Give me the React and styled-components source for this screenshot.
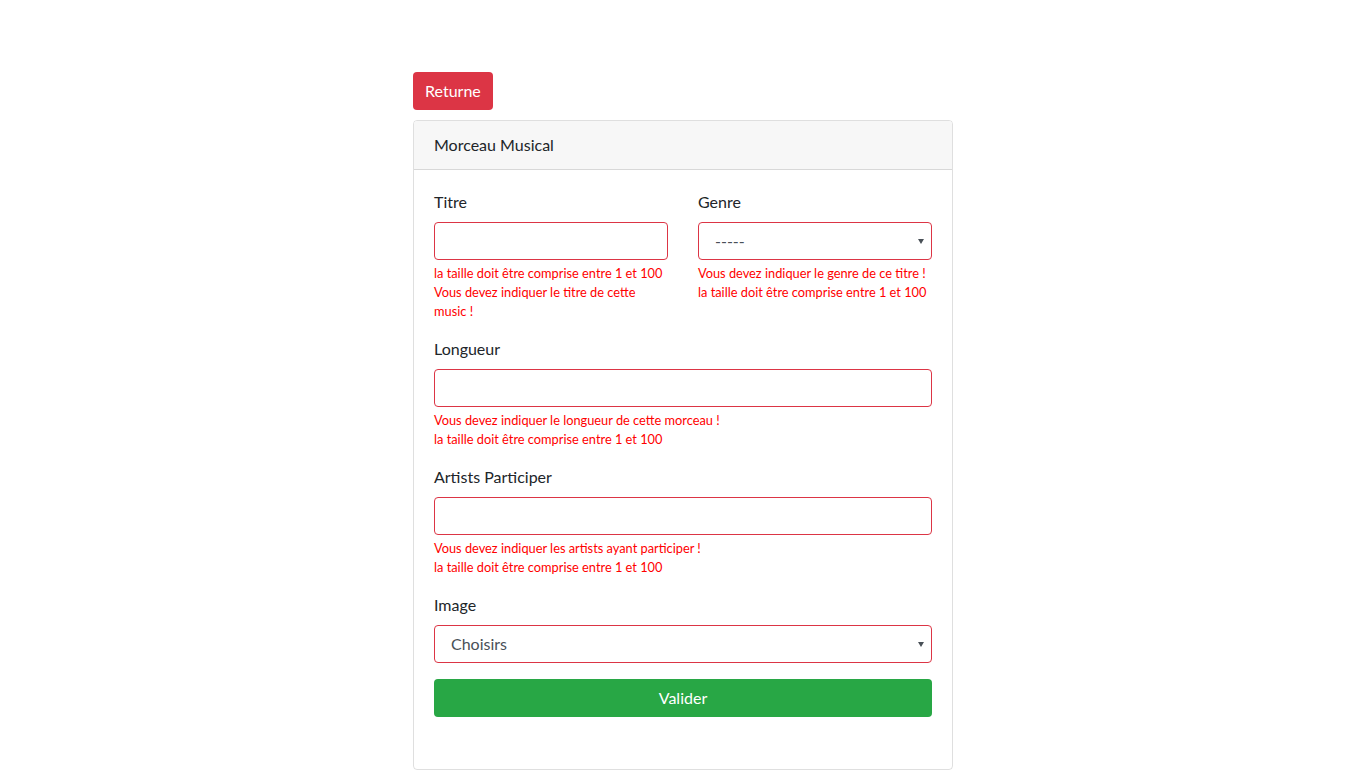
import React from 'react';
import styled, { createGlobalStyle } from 'styled-components';

const GlobalStyle = createGlobalStyle`
    * {
        box-sizing: border-box;
    }

    body {
        margin: 0;
        background: #fff;
        color: #212529;
        font-family: "Segoe UI", Lato, "Noto Sans", sans-serif;
        font-size: 16px;
        line-height: 1.5;
    }
`;

const Page = styled.div`
    width: 540px;
    margin: 0 auto;
    padding-top: 72px;
`;

const BackButton = styled.button`
    display: block;
    height: 38px;
    padding: 0 12px;
    margin-bottom: 10px;
    border: none;
    border-radius: 4px;
    background-color: #dc3545;
    color: #fff;
    font: inherit;
    cursor: pointer;
`;

const Card = styled.div`
    border: 1px solid rgba(0, 0, 0, 0.125);
    border-radius: 4px;
    height: 650px;
`;

const CardHeader = styled.div`
    padding: 12px 20px;
    background-color: #f7f7f7;
    border-bottom: 1px solid rgba(0, 0, 0, 0.125);
    border-radius: 3px 3px 0 0;
`;

const CardBody = styled.form`
    padding: 20px;
`;

const Row = styled.div`
    display: grid;
    grid-template-columns: 1fr 1fr;
    column-gap: 30px;
`;

const Group = styled.div`
    margin-bottom: 16px;
`;

const Label = styled.label`
    display: block;
    margin-bottom: 8px;
`;

const Input = styled.input`
    display: block;
    width: 100%;
    height: 38px;
    padding: 6px 12px;
    border: 1px solid #dc3545;
    border-radius: 4px;
    font: inherit;
    color: #495057;
    outline: none;
`;

const SelectWrap = styled.div`
    position: relative;

    &::after {
        content: '';
        position: absolute;
        right: 8px;
        top: 17px;
        border-left: 3.5px solid transparent;
        border-right: 3.5px solid transparent;
        border-top: 5px solid #495057;
        pointer-events: none;
    }
`;

const Select = styled.select`
    display: block;
    width: 100%;
    height: 38px;
    padding: 6px 12px 6px 16px;
    border: 1px solid #dc3545;
    border-radius: 4px;
    background: #fff;
    font: inherit;
    color: #495057;
    appearance: none;
    outline: none;
`;

const Feedback = styled.div`
    margin-top: 4px;
    font-size: 12.8px;
    line-height: 19px;
    color: #ff0000;
`;

const SubmitButton = styled.button`
    display: block;
    width: 100%;
    height: 38px;
    border: none;
    border-radius: 4px;
    background-color: #28a745;
    color: #fff;
    font: inherit;
    cursor: pointer;
`;

const Field = ({ label, children, errors }) => (
    <Group>
        <Label>{ label }</Label>
        { children }
        <Feedback>
            { errors.map((e) => <div key={e}>{ e }</div>) }
        </Feedback>
    </Group>
);

const SIZE = 'la taille doit être comprise entre 1 et 100';

const App = () => {
    return (
        <Page>
            <GlobalStyle />
            <BackButton type="button">Returne</BackButton>
            <Card>
                <CardHeader>Morceau Musical</CardHeader>
                <CardBody onSubmit={(e) => e.preventDefault()}>
                    <Row>
                        <Field label="Titre" errors={[SIZE, 'Vous devez indiquer le titre de cette music !']}>
                            <Input type="text" />
                        </Field>
                        <Field label="Genre" errors={['Vous devez indiquer le genre de ce titre !', SIZE]}>
                            <SelectWrap>
                                <Select defaultValue="">
                                    <option value="">-----</option>
                                </Select>
                            </SelectWrap>
                        </Field>
                    </Row>
                    <Field label="Longueur" errors={['Vous devez indiquer le longueur de cette morceau !', SIZE]}>
                        <Input type="text" />
                    </Field>
                    <Field label="Artists Participer" errors={['Vous devez indiquer les artists ayant participer !', SIZE]}>
                        <Input type="text" />
                    </Field>
                    <Group>
                        <Label>Image</Label>
                        <SelectWrap>
                            <Select defaultValue="">
                                <option value="">Choisirs</option>
                            </Select>
                        </SelectWrap>
                    </Group>
                    <SubmitButton type="submit">Valider</SubmitButton>
                </CardBody>
            </Card>
        </Page>
    );
}

export default App;
